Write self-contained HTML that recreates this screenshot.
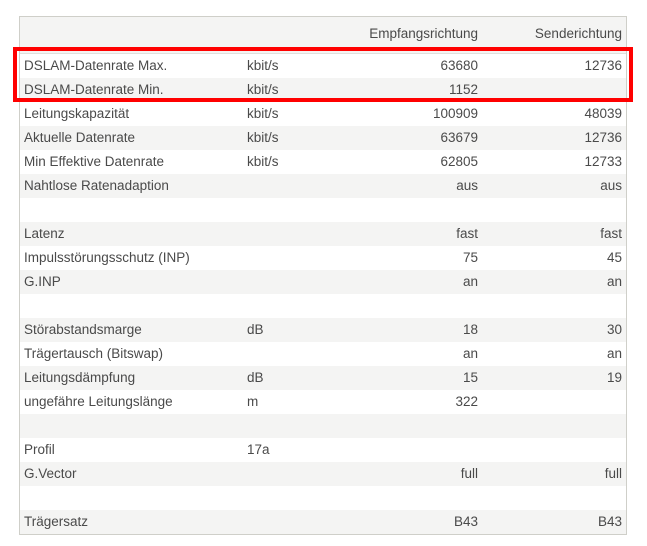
<!DOCTYPE html>
<html><head><meta charset="utf-8"><style>
body{margin:0;background:#fff;width:647px;height:546px;position:relative;font-family:"Liberation Sans",sans-serif;font-size:13.5px;color:#4a4a4a;}
.t{position:absolute;left:19px;top:16px;width:606px;height:517px;border:1px solid #cfcfc9;background:#fff;}
.hd{position:absolute;left:0;top:0;width:606px;height:36px;background:#f4f4f3;border-bottom:1px solid #e0e0dc;}
.r{position:absolute;left:0;width:606px;height:24px;line-height:24px;}
.g{background:#f4f4f3;}
.c1{position:absolute;left:4px;}
.c2{position:absolute;left:227px;}
.c3{position:absolute;right:148px;}
.c4{position:absolute;right:4px;}
.red{position:absolute;left:13px;top:47px;width:612px;height:47px;border:4px solid #f00;}
</style></head><body>
<div class="t">
<div class="hd"><span class="c3" style="top:9px">Empfangsrichtung</span><span class="c4" style="top:9px">Senderichtung</span></div>
<div class="r" style="top:37px"><span class="c1">DSLAM-Datenrate Max.</span><span class="c2">kbit/s</span><span class="c3">63680</span><span class="c4">12736</span></div>
<div class="r g" style="top:61px"><span class="c1">DSLAM-Datenrate Min.</span><span class="c2">kbit/s</span><span class="c3">1152</span></div>
<div class="r" style="top:85px"><span class="c1">Leitungskapazität</span><span class="c2">kbit/s</span><span class="c3">100909</span><span class="c4">48039</span></div>
<div class="r g" style="top:109px"><span class="c1">Aktuelle Datenrate</span><span class="c2">kbit/s</span><span class="c3">63679</span><span class="c4">12736</span></div>
<div class="r" style="top:133px"><span class="c1">Min Effektive Datenrate</span><span class="c2">kbit/s</span><span class="c3">62805</span><span class="c4">12733</span></div>
<div class="r g" style="top:157px"><span class="c1">Nahtlose Ratenadaption</span><span class="c3">aus</span><span class="c4">aus</span></div>
<div class="r" style="top:181px"></div>
<div class="r g" style="top:205px"><span class="c1">Latenz</span><span class="c3">fast</span><span class="c4">fast</span></div>
<div class="r" style="top:229px"><span class="c1">Impulsstörungsschutz (INP)</span><span class="c3">75</span><span class="c4">45</span></div>
<div class="r g" style="top:253px"><span class="c1">G.INP</span><span class="c3">an</span><span class="c4">an</span></div>
<div class="r" style="top:277px"></div>
<div class="r g" style="top:301px"><span class="c1">Störabstandsmarge</span><span class="c2">dB</span><span class="c3">18</span><span class="c4">30</span></div>
<div class="r" style="top:325px"><span class="c1">Trägertausch (Bitswap)</span><span class="c3">an</span><span class="c4">an</span></div>
<div class="r g" style="top:349px"><span class="c1">Leitungsdämpfung</span><span class="c2">dB</span><span class="c3">15</span><span class="c4">19</span></div>
<div class="r" style="top:373px"><span class="c1">ungefähre Leitungslänge</span><span class="c2">m</span><span class="c3">322</span></div>
<div class="r g" style="top:397px"></div>
<div class="r" style="top:421px"><span class="c1">Profil</span><span class="c2">17a</span></div>
<div class="r g" style="top:445px"><span class="c1">G.Vector</span><span class="c3">full</span><span class="c4">full</span></div>
<div class="r" style="top:469px"></div>
<div class="r g" style="top:493px"><span class="c1">Trägersatz</span><span class="c3">B43</span><span class="c4">B43</span></div>
</div>
<div class="red"></div>
</body></html>
